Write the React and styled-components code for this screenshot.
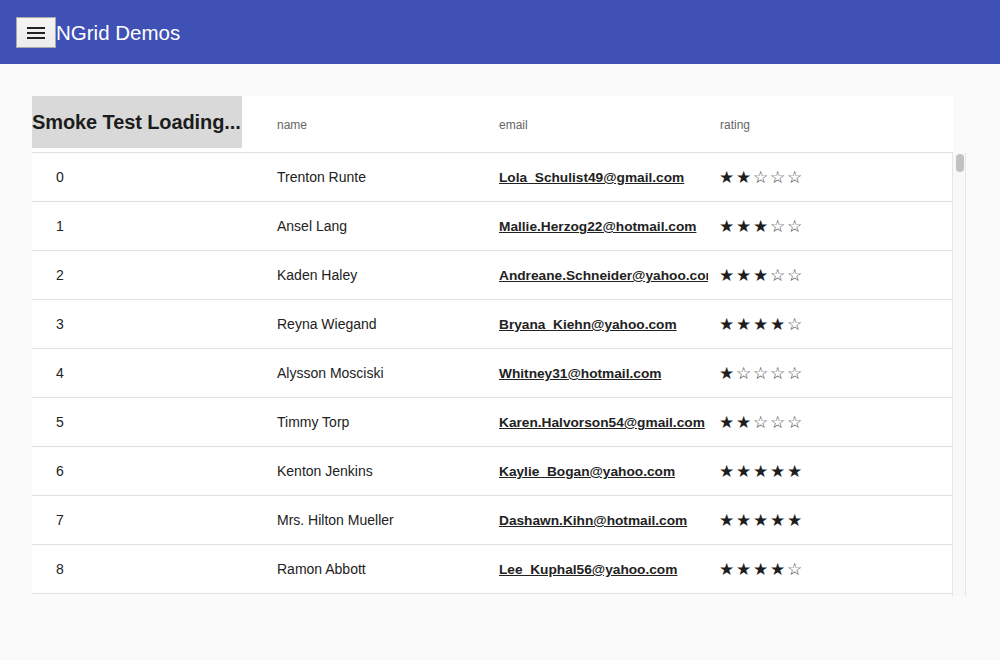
import React from "react";
import styled, { createGlobalStyle } from "styled-components";

const GlobalStyle = createGlobalStyle`
  body {
    margin: 0;
    background: #fafafa;
    font-family: "Liberation Sans", Arial, sans-serif;
    color: #222;
  }
`;

const rows = [
  { id: 0, name: "Trenton Runte", email: "Lola_Schulist49@gmail.com", rating: 2 },
  { id: 1, name: "Ansel Lang", email: "Mallie.Herzog22@hotmail.com", rating: 3 },
  { id: 2, name: "Kaden Haley", email: "Andreane.Schneider@yahoo.com", rating: 3 },
  { id: 3, name: "Reyna Wiegand", email: "Bryana_Kiehn@yahoo.com", rating: 4 },
  { id: 4, name: "Alysson Mosciski", email: "Whitney31@hotmail.com", rating: 1 },
  { id: 5, name: "Timmy Torp", email: "Karen.Halvorson54@gmail.com", rating: 2 },
  { id: 6, name: "Kenton Jenkins", email: "Kaylie_Bogan@yahoo.com", rating: 5 },
  { id: 7, name: "Mrs. Hilton Mueller", email: "Dashawn.Kihn@hotmail.com", rating: 5 },
  { id: 8, name: "Ramon Abbott", email: "Lee_Kuphal56@yahoo.com", rating: 4 },
];

const Toolbar = styled.header`
  height: 64px;
  background: #3f51b5;
  display: flex;
  align-items: center;
  padding-left: 16px;
`;

const MenuButton = styled.button`
  width: 40px;
  height: 31px;
  margin-top: 1px;
  border: 1px solid #a9a9a9;
  background: linear-gradient(#f4f4f4, #ececec);
  display: flex;
  align-items: center;
  justify-content: center;
  padding: 0;
`;

const AppTitle = styled.h1`
  margin: 0 0 0 0;
  padding-top: 2px;
  font-size: 20.5px;
  font-weight: 400;
  color: #fff;
  line-height: 1;
`;

const Main = styled.main`
  padding: 32px 0 0 32px;
`;

const GridFrame = styled.div`
  width: 936px;
`;

const HeaderRow = styled.div`
  width: 921px;
  height: 56px;
  background: #fff;
  border-bottom: 1px solid #e0e0e0;
  display: grid;
  grid-template-columns: 233px 222px 221px 245px;
  align-items: center;
`;

const HeaderCell = styled.div`
  font-size: 12px;
  color: #666;
  padding: 2px 0 0 12px;
`;

const LoadingCell = styled.div`
  align-self: start;
`;

const LoadingBox = styled.div`
  width: 210px;
  height: 52px;
  background: #d9d9d9;
  display: flex;
  align-items: center;
  padding-top: 1px;
  box-sizing: border-box;
  font-size: 20px;
  font-weight: 700;
  color: #1c1c1c;
  white-space: nowrap;
  letter-spacing: -0.1px;
`;

const BodyWrap = styled.div`
  display: flex;
`;

const Body = styled.div`
  width: 920px;
  height: 443px;
  overflow: hidden;
  background: #fafafa;
  border-right: 1px solid #e6e6e6;
`;

const Row = styled.div`
  height: 48px;
  background: #fff;
  border-bottom: 1px solid #e0e0e0;
  display: grid;
  grid-template-columns: 233px 222px 221px 244px;
  align-items: center;
  font-size: 14px;
  color: #222;
`;

const Cell = styled.div`
  padding-left: ${(p) => (p.$first ? "24px" : "12px")};
  white-space: nowrap;
  overflow: hidden;
`;

const Email = styled.a`
  font-size: 13.7px;
  font-weight: 700;
  color: #222;
  text-decoration: underline;
`;

const Stars = styled.div`
  display: flex;
  padding-left: 11px;
`;

const Star = styled.span`
  width: 17px;
  font-family: "DejaVu Sans", sans-serif;
  font-size: 17px;
  line-height: 1;
  color: ${(p) => (p.$on ? "#1e1e1e" : "#444")};
`;

const Track = styled.div`
  width: 13px;
  height: 443px;
  background: #f8f8f8;
  border-right: 1px solid #e6e6e6;
  padding: 1px 0 0 3px;
  box-sizing: border-box;
`;

const Thumb = styled.div`
  width: 8px;
  height: 18px;
  border-radius: 4px;
  background: #c1c1c1;
`;

function MenuIcon() {
  return (
    <svg width="20" height="14" viewBox="0 0 20 14">
      <rect x="1" y="1" width="18" height="2" fill="#222" />
      <rect x="1" y="6" width="18" height="2" fill="#222" />
      <rect x="1" y="11" width="18" height="2" fill="#222" />
    </svg>
  );
}

export default function App() {
  return (
    <>
      <GlobalStyle />
      <Toolbar>
        <MenuButton>
          <MenuIcon />
        </MenuButton>
        <AppTitle>NGrid Demos</AppTitle>
      </Toolbar>
      <Main>
        <GridFrame>
          <HeaderRow>
            <LoadingCell>
              <LoadingBox>Smoke Test Loading...</LoadingBox>
            </LoadingCell>
            <HeaderCell>name</HeaderCell>
            <HeaderCell>email</HeaderCell>
            <HeaderCell>rating</HeaderCell>
          </HeaderRow>
          <BodyWrap>
            <Body>
              {rows.map((r) => (
                <Row key={r.id}>
                  <Cell $first>{r.id}</Cell>
                  <Cell>{r.name}</Cell>
                  <Cell>
                    <Email href="#">{r.email}</Email>
                  </Cell>
                  <Stars>
                    {[1, 2, 3, 4, 5].map((n) => (
                      <Star key={n} $on={n <= r.rating}>
                        {n <= r.rating ? "★" : "☆"}
                      </Star>
                    ))}
                  </Stars>
                </Row>
              ))}
            </Body>
            <Track>
              <Thumb />
            </Track>
          </BodyWrap>
        </GridFrame>
      </Main>
    </>
  );
}
